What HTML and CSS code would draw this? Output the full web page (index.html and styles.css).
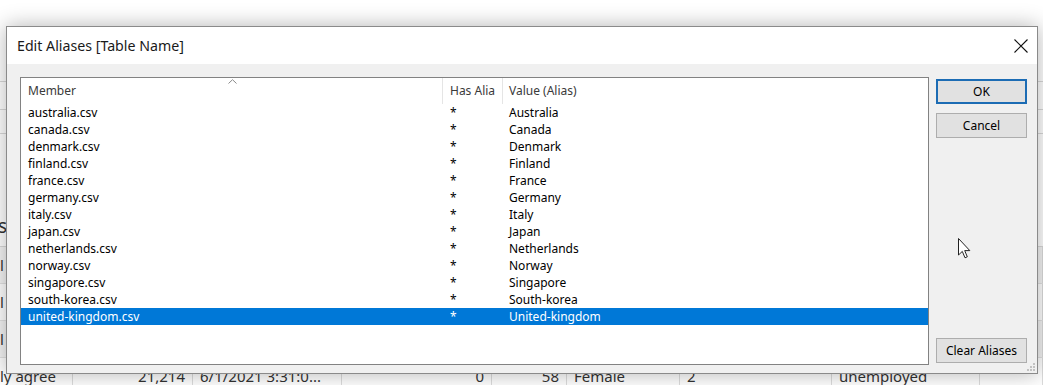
FILE: index.html
```html
<!DOCTYPE html>
<html lang="en">
<head>
    <meta charset="UTF-8">
    <meta name="viewport" content="width=device-width, initial-scale=1.0">
    <title>Edit Aliases [Table Name]</title>
    <link rel="stylesheet" href="styles.css">
</head>
<body>

<!-- sheet behind the dialog -->
<div class="backdrop">
    <div class="bd-line bd-top"></div>
    <div class="bd-line bd-band"></div>
    <div class="bd-line bd-band2"></div>
    <div class="bd-line bd-head"><span class="bd-head-text">s</span></div>
    <div class="bd-row shaded">
        <span class="bd-cell">l</span><span></span><span></span><span></span><span></span><span></span><span></span><span></span><span></span>
    </div>
    <div class="bd-row">
        <span class="bd-cell">l</span><span></span><span></span><span></span><span></span><span></span><span></span><span></span><span></span>
    </div>
    <div class="bd-row shaded">
        <span class="bd-cell">l</span><span></span><span></span><span></span><span></span><span></span><span></span><span></span><span></span>
    </div>
    <div class="bd-row">
        <span class="bd-cell">ly agree</span>
        <span class="bd-cell num">21,214</span>
        <span class="bd-cell">6/1/2021 3:31:0...</span>
        <span class="bd-cell num">0</span>
        <span class="bd-cell num">58</span>
        <span class="bd-cell">Female</span>
        <span class="bd-cell">2</span>
        <span class="bd-cell">unemployed</span>
        <span></span>
    </div>
</div>

<div class="dialog">
    <div class="titlebar">
        <span class="title">Edit Aliases [Table Name]</span>
        <svg class="close-icon" width="14" height="14" viewBox="0 0 14 14">
            <path d="M0.5 0.5 L13.5 13.5 M13.5 0.5 L0.5 13.5" stroke="#111" stroke-width="1.1" fill="none"/>
        </svg>
    </div>
    <div class="dlg-body">
        <div class="listbox">
            <div class="list-head">
                <div class="cell c-member">Member
                    <svg class="sort-arrow" width="9" height="5" viewBox="0 0 9 5">
                        <path d="M0.5 4.5 L4.5 0.7 L8.5 4.5" stroke="#8a8a8a" stroke-width="1" fill="none"/>
                    </svg>
                </div>
                <div class="cell c-has">Has Alia</div>
                <div class="cell c-value">Value (Alias)</div>
            </div>
            <div class="list-row"><div class="cell c-member">australia.csv</div><div class="cell c-has">*</div><div class="cell c-value">Australia</div></div>
            <div class="list-row"><div class="cell c-member">canada.csv</div><div class="cell c-has">*</div><div class="cell c-value">Canada</div></div>
            <div class="list-row"><div class="cell c-member">denmark.csv</div><div class="cell c-has">*</div><div class="cell c-value">Denmark</div></div>
            <div class="list-row"><div class="cell c-member">finland.csv</div><div class="cell c-has">*</div><div class="cell c-value">Finland</div></div>
            <div class="list-row"><div class="cell c-member">france.csv</div><div class="cell c-has">*</div><div class="cell c-value">France</div></div>
            <div class="list-row"><div class="cell c-member">germany.csv</div><div class="cell c-has">*</div><div class="cell c-value">Germany</div></div>
            <div class="list-row"><div class="cell c-member">italy.csv</div><div class="cell c-has">*</div><div class="cell c-value">Italy</div></div>
            <div class="list-row"><div class="cell c-member">japan.csv</div><div class="cell c-has">*</div><div class="cell c-value">Japan</div></div>
            <div class="list-row"><div class="cell c-member">netherlands.csv</div><div class="cell c-has">*</div><div class="cell c-value">Netherlands</div></div>
            <div class="list-row"><div class="cell c-member">norway.csv</div><div class="cell c-has">*</div><div class="cell c-value">Norway</div></div>
            <div class="list-row"><div class="cell c-member">singapore.csv</div><div class="cell c-has">*</div><div class="cell c-value">Singapore</div></div>
            <div class="list-row"><div class="cell c-member">south-korea.csv</div><div class="cell c-has">*</div><div class="cell c-value">South-korea</div></div>
            <div class="list-row selected"><div class="cell c-member">united-kingdom.csv</div><div class="cell c-has">*</div><div class="cell c-value">United-kingdom</div></div>
        </div>
        <div class="buttons">
            <button class="btn btn-default">OK</button>
            <button class="btn">Cancel</button>
            <button class="btn btn-clear">Clear Aliases</button>
        </div>
    </div>
    <svg class="grip" width="8" height="8" viewBox="0 0 8 8">
        <rect x="6" y="0" width="2" height="2" fill="#c2c2c2"/>
        <rect x="3" y="3" width="2" height="2" fill="#c2c2c2"/>
        <rect x="6" y="3" width="2" height="2" fill="#c2c2c2"/>
        <rect x="0" y="6" width="2" height="2" fill="#c2c2c2"/>
        <rect x="3" y="6" width="2" height="2" fill="#c2c2c2"/>
        <rect x="6" y="6" width="2" height="2" fill="#c2c2c2"/>
    </svg>
</div>

<svg class="cursor" width="14" height="22" viewBox="0 0 14 22">
    <path d="M0.5 0.5 L0.5 17 L4.3 13.4 L7 19.8 L9.3 18.8 L6.7 12.6 L11.8 12.6 Z" fill="#fff" stroke="#222" stroke-width="1"/>
</svg>

</body>
</html>
```

FILE: styles.css
```css
body {
    margin: 0;
    background-color: #ffffff;
    font-family: "Noto Sans", "Open Sans", sans-serif;
    overflow: hidden;
}

/* sheet behind the dialog */
.backdrop {
    width: 1043px;
    color: #333333;
    font-size: 15px;
}
.bd-line {
    border-bottom: 1px solid #d9d9d9;
}
.bd-top {
    height: 81px;
}
.bd-band {
    height: 27px;
}
.bd-band2 {
    height: 23px;
}
.bd-head {
    height: 112px;
    display: flex;
    align-items: flex-end;
}
.bd-head-text {
    font-size: 19px;
    margin: 0 0 10px -2px;
    line-height: 20px;
}
.bd-row {
    height: 36px;
    border-bottom: 1px solid #e2e2e2;
    display: grid;
    grid-template-columns: 73px 120px 149px 150px 75px 113px 152px 148px 1fr;
    align-items: center;
}
.bd-row.shaded {
    background-color: #f4f4f4;
}
.bd-row > span {
    border-right: 1px solid #dddddd;
    height: 100%;
    display: flex;
    align-items: center;
    white-space: nowrap;
    overflow: hidden;
}
.bd-cell {
    padding-left: 7px;
}
.bd-row > .bd-cell:first-child {
    padding-left: 0;
}
.bd-cell.num {
    justify-content: flex-end;
    padding-left: 0;
    padding-right: 7px;
}

/* dialog window */
.dialog {
    position: absolute;
    left: 6px;
    top: 26px;
    width: 1030px;
    height: 346px;
    border: 1px solid #8a8a8a;
    background-color: #f0f0f0;
    box-shadow: 0 0 20px rgba(0, 0, 0, 0.3);
    display: flex;
    flex-direction: column;
}
.titlebar {
    height: 37px;
    background-color: #ffffff;
    display: flex;
    align-items: center;
    justify-content: space-between;
    padding: 0 9px 0 10px;
}
.title {
    font-size: 14.2px;
    color: #1a1a1a;
}
.dlg-body {
    flex: 1;
    display: flex;
    gap: 7px;
    padding: 13px 10px 8px 13px;
}

.listbox {
    width: 907px;
    border: 1px solid #828282;
    background-color: #ffffff;
    font-size: 12px;
}
.list-head,
.list-row {
    display: grid;
    grid-template-columns: 422px 60px 1fr;
}
.list-head {
    height: 26px;
    color: #3a3a3a;
}
.list-head .cell {
    line-height: 26px;
    border-right: 1px solid #e5e5e5;
}
.list-head .c-value {
    border-right: none;
}
.list-row {
    height: 17px;
    line-height: 17px;
    color: #000000;
}
.list-row.selected {
    background-color: #0078d7;
    color: #ffffff;
}
.cell {
    padding-left: 7px;
    white-space: nowrap;
    overflow: hidden;
}
.c-value {
    padding-left: 6px;
}
.list-head .c-member {
    position: relative;
}
.sort-arrow {
    position: absolute;
    left: 207px;
    top: 1px;
}

.buttons {
    width: 91px;
    display: flex;
    flex-direction: column;
    padding: 2px 0;
}
.btn {
    height: 25px;
    background-color: #e1e1e1;
    border: 1px solid #adadad;
    font-family: "Noto Sans", "Open Sans", sans-serif;
    font-size: 12px;
    color: #000000;
    padding: 0;
}
.btn-default {
    border: 2px solid #1c6cb4;
}
.btn + .btn {
    margin-top: 9px;
}
.btn-clear {
    margin-top: auto !important;
}

.grip {
    position: absolute;
    right: 2px;
    bottom: 2px;
}
.cursor {
    position: absolute;
    left: 958px;
    top: 238px;
}
```
